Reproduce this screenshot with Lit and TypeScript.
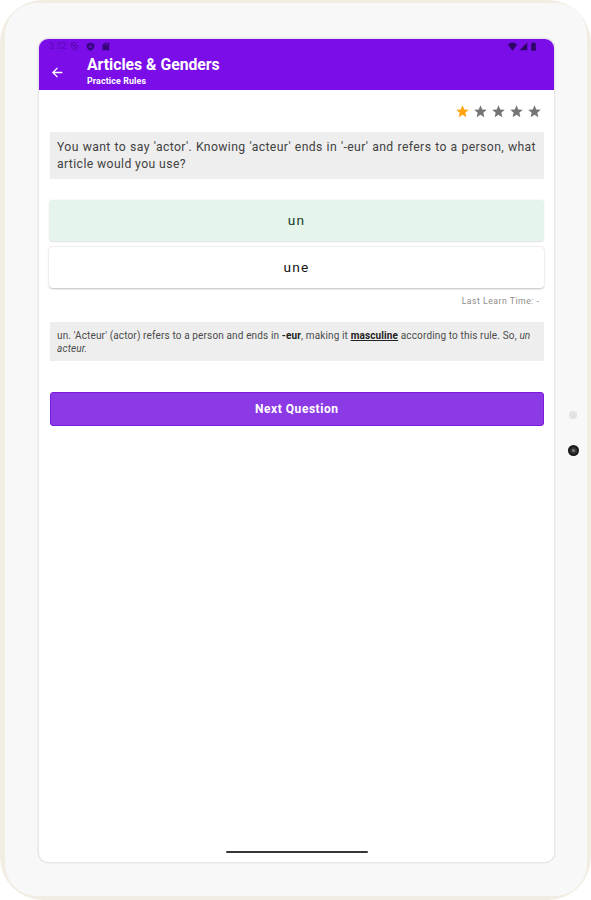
import { LitElement, html, css, svg } from "lit";
import { customElement, property } from "lit/decorators.js";

const STAR = "M12 17.27 18.18 21l-1.64-7.03L22 9.24l-7.19-.61L12 2 9.19 8.63 2 9.24l5.46 4.73L5.82 21z";

@customElement("star-rating")
class StarRating extends LitElement {
  @property({ type: Number }) value = 0;
  static styles = css`
    :host { display: flex; justify-content: flex-end; gap: 3px; }
    .star { width: 15px; height: 15px; fill: #757575; }
    .on { fill: #ffa30f; }
  `;
  render() {
    return [1, 2, 3, 4, 5].map(
      (n) => html`<svg class="star ${n <= this.value ? "on" : ""}" viewBox="0 0 24 24">${svg`<path d=${STAR} />`}</svg>`
    );
  }
}

@customElement("status-bar")
class StatusBar extends LitElement {
  static styles = css`
    :host { display: flex; align-items: center; height: 15px; padding: 0 16px 0 10px; color: #35077b; }
    .time { font-size: 9px; line-height: 15px; width: 21px; letter-spacing: 0.1px; color: #5a08b8; }
    svg { width: 9px; height: 9px; fill: currentColor; display: block; }
    .left { display: flex; gap: 6.5px; flex: 1; }
    .faint { color: #5208a6; }
    .right { display: flex; gap: 1.5px; color: #2d0663; }
  `;
  render() {
    return html`
      <span class="time">3:52</span>
      <div class="left">
        <svg class="faint" viewBox="0 0 24 24"><path fill="none" stroke="currentColor" stroke-width="2.4" d="M12 22C7 17 3 13 3 9a7 7 0 0 1 14-2M21 9c0 5-4 8-9 13M3 3l18 18M9 9h8" /></svg>
        <svg viewBox="0 0 24 24"><path fill-rule="evenodd" d="M12 1 2 5v7c0 5 4 9 10 12 6-3 10-7 10-12V5zM12 8a4 4 0 1 1 0 8 4 4 0 0 1 0-8zM12 10a2 2 0 1 0 0 4 2 2 0 0 0 0-4z" /></svg>
        <svg viewBox="0 0 24 24"><path d="M20 2H10L4 8v14h18V2zM12 7h-2V4h2zm4 0h-2V4h2zm3 0h-2V4h2z" /></svg>
      </div>
      <div class="right">
        <svg viewBox="0 0 24 24"><path d="M12 23 0 7C3 3 7 2 12 2s9 1 12 5z" /></svg>
        <svg viewBox="0 0 24 24"><path d="M1 22h21V1z" /></svg>
        <svg viewBox="0 0 24 24"><path d="M15 3V1H9v2H6v20h12V3z" /></svg>
      </div>
    `;
  }
}

@customElement("answer-option")
class AnswerOption extends LitElement {
  @property({ type: Boolean, reflect: true }) correct = false;
  static styles = css`
    :host {
      display: flex; align-items: center; justify-content: center; box-sizing: border-box;
      height: 41px; border-radius: 4px; background: #fff; color: #111;
      box-shadow: 0 0.5px 2px rgba(0, 0, 0, 0.25);
      font-size: 13.7px; font-weight: 400; letter-spacing: 1.15px;
    }
    :host([correct]) { background: #e5f5eb; color: #123a1f; box-shadow: 0 0.5px 1.5px rgba(0, 0, 0, 0.13); }
  `;
  render() {
    return html`<span><slot></slot></span>`;
  }
}

@customElement("app-root")
class AppRoot extends LitElement {
  static styles = css`
    :host {
      display: block; height: 900px;
      background: #fff; font-family: Roboto, "Noto Sans", sans-serif;
    }
    .shell {
      box-sizing: border-box; height: 900px; padding: 3px 4px 4px 5px;
      background: #f1ede2; border-radius: 43px;
    }
    .tablet {
      display: grid; grid-template-columns: 515px 33px; box-sizing: border-box;
      height: 893px; padding: 35px 0 0 34px; border-radius: 32px; background: #f8f8f8;
    }
    .screen {
      display: flex; flex-direction: column; height: 823px; margin-top: 1px; border-radius: 9px;
      background: #fff; overflow: hidden; box-shadow: 0 0 0 1.5px #e8e8e8;
    }
    .header { height: 51px; flex: none; background: #7b0de8; color: #fff; }
    .bar { display: grid; grid-template-columns: 36px 1fr; padding-left: 12px; }
    .back { width: 13px; height: 13px; margin-top: 11.5px; fill: none; stroke: #fff; stroke-width: 2.5; }
    .title { font-size: 15.75px; line-height: 20px; font-weight: 700; white-space: nowrap; margin-top: 1px; }
    .subtitle { font-size: 8.8px; line-height: 12px; font-weight: 700; letter-spacing: 0.15px; }
    .content { display: flex; flex-direction: column; flex: 1; padding: 13.5px 10.5px 0 11px; }
    star-rating { padding-right: 1.5px; height: 15px; }
    .question {
      box-sizing: border-box; height: 47px; margin-top: 13px; padding: 7px 7.5px 0 7px; background: #eee; color: #424242;
      font-size: 12.2px; line-height: 17px; letter-spacing: 0.4px; text-align: justify;
    }
    .answers { display: grid; gap: 6px; margin: 21px -0.5px 0 -1px; }
    .learned { margin-top: 7.5px; padding-right: 4px; text-align: right; font-size: 8.7px; line-height: 12px; letter-spacing: 0.5px; color: #8c8c8c; }
    .explain {
      box-sizing: border-box; height: 39px; margin-top: 15px; padding: 8px 7px 0; background: #eee; color: #4c4c4c;
      font-size: 10px; line-height: 12.6px; letter-spacing: 0.14px;
    }
    .explain b { color: #222; }
    .next {
      height: 34px; margin: 30.5px 0 0; padding: 0; border: 1px solid #7b19de; border-radius: 3px;
      background: #8b3ae6; color: #fff; font: 700 12px Roboto, sans-serif; letter-spacing: 0.55px;
    }
    .home { width: 142px; height: 2px; margin: auto auto 9px; border-radius: 1px; background: #38343a; }
    .sensors { display: flex; flex-direction: column; align-items: center; gap: 26px; padding: 373px 0 0 5px; }
    .light { width: 8px; height: 8px; border-radius: 50%; background: #e2e2e2; }
    .camera { width: 11px; height: 11px; border-radius: 50%; background: radial-gradient(circle, #777 0 1px, #333 2px 3px, #191919 4px); }
  `;
  render() {
    return html`
      <div class="shell">
        <div class="tablet">
          <main class="screen">
            <header class="header">
              <status-bar></status-bar>
              <div class="bar">
                <svg class="back" viewBox="0 0 24 24"><path d="M21 12H4M12 3.5 3.5 12l8.5 8.5" /></svg>
                <div>
                  <div class="title">Articles &amp; Genders</div>
                  <div class="subtitle">Practice Rules</div>
                </div>
              </div>
            </header>
            <section class="content">
              <star-rating .value=${1}></star-rating>
              <div class="question">You want to say 'actor'. Knowing 'acteur' ends in '-eur' and refers to a person, what article would you use?</div>
              <div class="answers">
                <answer-option correct>un</answer-option>
                <answer-option>une</answer-option>
              </div>
              <div class="learned">Last Learn Time: -</div>
              <div class="explain">un. 'Acteur' (actor) refers to a person and ends in <b>-eur</b>, making it <b><u>masculine</u></b> according to this rule. So, <i>un acteur.</i></div>
              <button class="next">Next Question</button>
              <div class="home"></div>
            </section>
          </main>
          <aside class="sensors"><div class="light"></div><div class="camera"></div></aside>
        </div>
      </div>
    `;
  }
}
